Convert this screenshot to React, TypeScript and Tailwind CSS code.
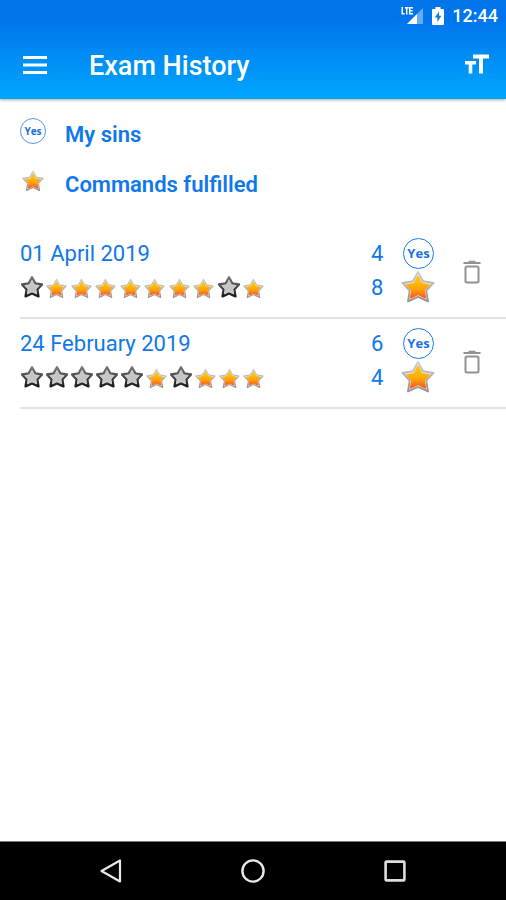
const STAR = "M16 1.8 L20.8 10.6 L30.6 12.2 L23.8 19.4 L25.4 29.6 L16 25.2 L6.6 29.6 L8.2 19.4 L1.4 12.2 L11.2 10.6 Z";
const STAR_CORE = "M16 6.2 L19.4 13 L26.4 14.1 L21.6 19.2 L22.8 26 L16 22.9 L9.2 26 L10.4 19.2 L5.6 14.1 L12.6 13 Z";

type Exam = {
  date: string;
  sins: number;
  fulfilled: number;
  marks: boolean[];
};

const exams: Exam[] = [
  {
    date: "01 April 2019",
    sins: 4,
    fulfilled: 8,
    marks: [false, true, true, true, true, true, true, true, false, true],
  },
  {
    date: "24 February 2019",
    sins: 6,
    fulfilled: 4,
    marks: [false, false, false, false, false, true, false, true, true, true],
  },
];

// Shared gradients for all the stars
function StarDefs() {
  return (
    <svg className="absolute w-0 h-0" aria-hidden="true">
      <defs>
        <linearGradient id="gold" x1="0" y1="0" x2="0" y2="1">
          <stop offset="0.2" stopColor="#ffc008" />
          <stop offset="0.6" stopColor="#ffa30a" />
          <stop offset="1" stopColor="#ff5a1c" />
        </linearGradient>
        <linearGradient id="silver" x1="0" y1="0" x2="0" y2="1">
          <stop offset="0" stopColor="#cfcfcf" />
          <stop offset="1" stopColor="#99928e" />
        </linearGradient>
        <linearGradient id="rim" x1="0" y1="0" x2="0" y2="1">
          <stop offset="0" stopColor="#777777" />
          <stop offset="1" stopColor="#1c1c1c" />
        </linearGradient>
      </defs>
    </svg>
  );
}

function GoldStar({ className }: { className: string }) {
  return (
    <svg viewBox="0 0 32 32" className={className} aria-hidden="true">
      <path d={STAR} fill="#e9e6e3" stroke="url(#silver)" strokeWidth="1.8" strokeLinejoin="round" />
      <path d={STAR_CORE} fill="url(#gold)" stroke="url(#gold)" strokeWidth="1.6" strokeLinejoin="round" />
    </svg>
  );
}

function GreyStar({ className }: { className: string }) {
  return (
    <svg viewBox="0 0 32 32" className={className} aria-hidden="true">
      <path d={STAR} fill="#bdbdbd" stroke="url(#rim)" strokeWidth="3.4" strokeLinejoin="round" />
      <path d={STAR_CORE} fill="#c6c6c6" stroke="#d4d4d4" strokeWidth="1" strokeLinejoin="round" />
    </svg>
  );
}

function StatusBar() {
  return (
    <div className="flex h-8 items-center justify-end pr-2 text-white">
      <svg viewBox="0 0 23 20" className="h-5 w-[23px]" aria-hidden="true">
        <path d="M22 2 V18 H6 Z" fill="#fff" fillOpacity="0.4" />
        <path d="M16 8 V18 H6 Z" fill="#fff" />
        <path
          d="M1.2 1 V7.8 H3.6 M3.8 1.7 H7.6 M5.7 1.7 V8.5 M12 1.7 H8.7 V7.8 H12 M8.7 4.7 H11.6"
          fill="none"
          stroke="#fff"
          strokeWidth="1.5"
        />
      </svg>
      <svg viewBox="0 0 12 18" className="ml-2 h-[18px] w-3" aria-hidden="true">
        <path d="M3.5 0 H8.5 V2 H11 Q12 2 12 3 V17 Q12 18 11 18 H1 Q0 18 0 17 V3 Q0 2 1 2 H3.5 Z" fill="#fff" />
        <path d="M7 4.5 L2.8 10.6 H5.4 V15 L9.4 8.8 H7 Z" fill="#0a7be8" />
      </svg>
      <span className="ml-2 text-lg font-medium">12:44</span>
    </div>
  );
}

function YesBadge({ large = false }: { large?: boolean }) {
  return (
    <span
      className={`flex shrink-0 items-center justify-center rounded-full border font-['Open_Sans',sans-serif] font-bold leading-none text-[#1a6fe0] ${
        large ? "size-[31px] border-[#1a7cf0] text-[13px]" : "size-[26px] border-[#5b95e8] text-[10px]"
      }`}
    >
      Yes
    </span>
  );
}

function ExamRow({ exam }: { exam: Exam }) {
  return (
    <li className="ml-5 flex h-[90px] items-center border-b-2 border-[#e3e3e3]">
      <div className="min-w-0 flex-1 pb-1.5">
        <div className="flex h-[34px] items-center">{exam.date}</div>
        <div className="flex h-[34px] w-[244px] items-center justify-between pl-px">
          {exam.marks.map((done, i) =>
            done ? (
              <GoldStar key={i} className="mt-0.5 size-[21px]" />
            ) : (
              <GreyStar key={i} className="size-[22px]" />
            )
          )}
        </div>
      </div>
      <div className="w-[43px] pb-1.5">
        <div className="flex h-[34px] items-center gap-5">
          <span className="w-3">{exam.sins}</span>
          <YesBadge large />
        </div>
        <div className="flex h-[34px] items-center gap-[18px]">
          <span className="w-3">{exam.fulfilled}</span>
          <GoldStar className="size-[34px] shrink-0" />
        </div>
      </div>
      <button type="button" aria-label={`Delete ${exam.date}`} className="mr-5 ml-11 flex h-12 w-7 items-center justify-center pb-0.5">
        <svg viewBox="0 0 18 24" className="h-6 w-[18px]" fill="none" stroke="#929292" strokeWidth="2" aria-hidden="true">
          <path d="M0.5 3 H17.5 M5.5 1.8 H12.5" />
          <rect x="2.5" y="6.5" width="13" height="16" rx="1.5" />
        </svg>
      </button>
    </li>
  );
}

function NavBar() {
  return (
    <nav className="flex h-[59px] justify-center border-t border-[#777] bg-black">
      <button type="button" aria-label="Back" className="flex w-[142px] items-center justify-center">
        <svg viewBox="0 0 24 24" className="size-6" fill="none" stroke="#e8e8e8" strokeWidth="2.2" strokeLinejoin="round" aria-hidden="true">
          <path d="M21 1.5 V22.5 L2.5 12 Z" />
        </svg>
      </button>
      <button type="button" aria-label="Home" className="flex w-[142px] items-center justify-center">
        <svg viewBox="0 0 24 24" className="size-6" fill="none" stroke="#e8e8e8" strokeWidth="2.4" aria-hidden="true">
          <circle cx="12" cy="12" r="10.6" />
        </svg>
      </button>
      <button type="button" aria-label="Recent apps" className="flex w-[142px] items-center justify-center">
        <svg viewBox="0 0 24 24" className="size-6" fill="none" stroke="#dedede" strokeWidth="2.6" aria-hidden="true">
          <rect x="2.6" y="2.6" width="18.8" height="18.8" rx="1" />
        </svg>
      </button>
    </nav>
  );
}

export default function App() {
  return (
    <div className="flex min-h-screen flex-col bg-white font-[Roboto,sans-serif]">
      <StarDefs />
      <header className="bg-linear-to-b from-[#0075eb] from-20% to-[#00a6ff] shadow-[0_1px_3px_rgba(0,0,0,0.35)]">
        <StatusBar />
        <div className="flex h-[67px] items-center px-[17px] text-white">
          <button type="button" aria-label="Menu" className="flex size-9 items-center justify-center pb-0.5">
            <svg viewBox="0 0 24 18" className="h-[18px] w-6" fill="none" stroke="#fff" strokeWidth="3" aria-hidden="true">
              <path d="M0 1.5 H24 M0 9 H24 M0 16.5 H24" />
            </svg>
          </button>
          <h1 className="ml-9 flex-1 pt-0.5 text-[27px] font-medium">Exam History</h1>
          <button type="button" aria-label="Text size" className="flex h-9 w-6 items-center justify-center pb-1">
            <svg viewBox="0 0 24 20" className="h-5 w-6" fill="#fff" aria-hidden="true">
              <path d="M8 0.5 H24 V4.5 H18 V19.5 H14 V4.5 H8 Z" />
              <path d="M0 7 H11 V10.5 H7.3 V19.5 H3.7 V10.5 H0 Z" />
            </svg>
          </button>
        </div>
      </header>

      <main className="flex-1 text-[#0f78ea]">
        <ul className="px-5 pt-[10px] text-[22px] font-semibold">
          <li className="flex h-[50px] items-center">
            <span className="mb-1.5 flex w-[45px]">
              <YesBadge />
            </span>
            <span>My sins</span>
          </li>
          <li className="flex h-[50px] items-center">
            <span className="mb-1.5 flex w-[45px] pl-0.5">
              <GoldStar className="size-[22px]" />
            </span>
            <span>Commands fulfilled</span>
          </li>
        </ul>

        <ul className="mt-5 text-[22px]">
          {exams.map((exam) => (
            <ExamRow key={exam.date} exam={exam} />
          ))}
        </ul>
      </main>

      <NavBar />
    </div>
  );
}
